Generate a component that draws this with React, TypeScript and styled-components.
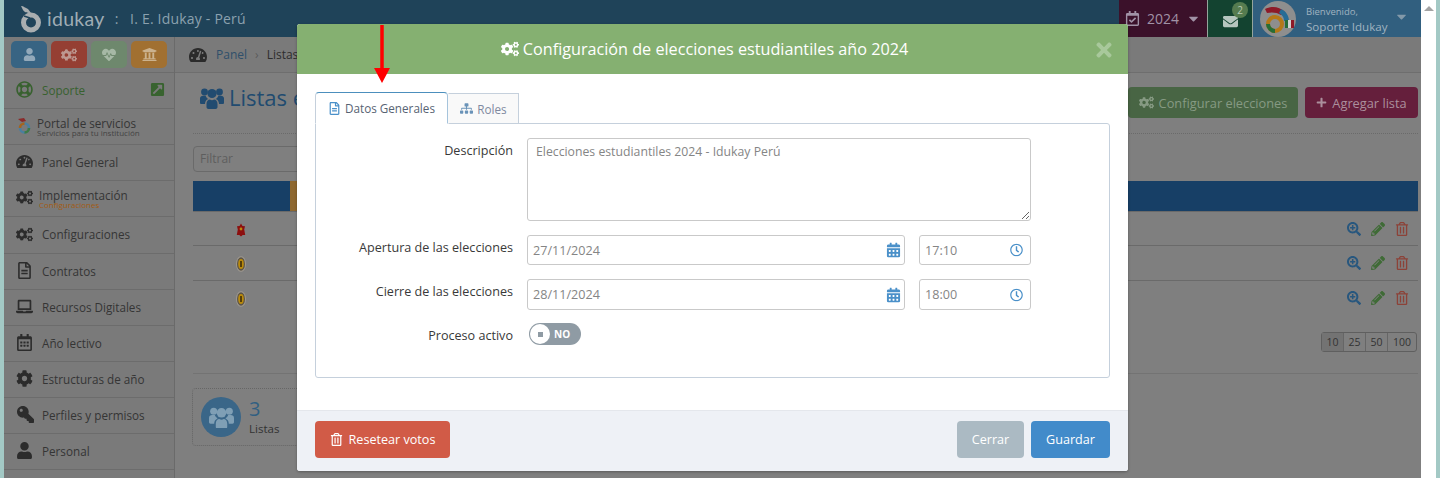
import styled, { createGlobalStyle } from "styled-components";
import {
  FaCalendarAlt,
  FaCaretDown,
  FaCog,
  FaCogs,
  FaEnvelope,
  FaExternalLinkSquareAlt,
  FaHeartbeat,
  FaKey,
  FaLaptop,
  FaPencilAlt,
  FaPlus,
  FaRegCalendarAlt,
  FaRegCalendarCheck,
  FaRegClock,
  FaRegFileAlt,
  FaRegLifeRing,
  FaRegTrashAlt,
  FaSearchPlus,
  FaSitemap,
  FaTachometerAlt,
  FaTimes,
  FaUniversity,
  FaUser,
} from "react-icons/fa";

const GlobalStyle = createGlobalStyle`
  html, body {
    margin: 0;
    padding: 0;
    background: #ffffff;
    font-family: "Open Sans", "Noto Sans", sans-serif;
  }
  * { box-sizing: border-box; }
`;

const Page = styled.div`
  position: relative;
  display: flex;
  width: 1440px;
  height: 478px;
  overflow: hidden;
`;

const EdgeStrip = styled.div<{ $width: number }>`
  flex: 0 0 ${({ $width }) => $width}px;
  background: #a3c9c5;
`;

const Shell = styled.div`
  flex: 0 0 1417px;
  display: flex;
  flex-direction: column;
  background: #7f7f7f;
`;

const ScrollTrack = styled.div`
  flex: 0 0 15px;
  background: #ffffff;
  display: flex;
  justify-content: center;
  padding-top: 6px;
`;

const ScrollArrow = styled.div`
  width: 0;
  height: 0;
  border-left: 5px solid transparent;
  border-right: 5px solid transparent;
  border-bottom: 5px solid #a3a3a3;
`;

const TopBar = styled.header`
  flex: 0 0 37px;
  display: flex;
  align-items: stretch;
  background: #1f4359;
`;

const Brand = styled.div`
  flex: 1;
  display: flex;
  align-items: center;
  padding-left: 15px;
  color: #a9b9c3;
`;

const BrandName = styled.span`
  font-family: "Lato", sans-serif;
  font-size: 19.5px;
  font-weight: 400;
  margin-left: 5px;
  letter-spacing: 0.3px;
  color: #9fadb5;
`;

const BrandSchool = styled.span`
  font-size: 14px;
  margin-left: 10px;
  letter-spacing: 0.2px;
  color: #8ba1af;
`;

const YearBlock = styled.div`
  flex: 0 0 89px;
  display: flex;
  align-items: center;
  gap: 7px;
  padding-left: 6px;
  background: #3b112a;
  color: #a192a6;
  font-size: 14px;
  border-right: 1px solid #95a59c;
`;

const MailBlock = styled.div`
  position: relative;
  flex: 0 0 45px;
  display: flex;
  align-items: center;
  justify-content: center;
  padding-top: 5px;
  background: #134330;
  color: #b6c6bf;
  font-size: 15px;
  border-right: 1px solid #95a59c;
`;

const MailBadge = styled.span`
  position: absolute;
  top: 2px;
  left: 24px;
  width: 16px;
  height: 16px;
  border-radius: 50%;
  background: #557b4f;
  color: #b8cbb5;
  font-size: 10px;
  line-height: 16px;
  text-align: center;
`;

const UserBlock = styled.div`
  flex: 0 0 168px;
  display: flex;
  align-items: center;
  padding-left: 7px;
  background: #315f7f;
  color: #a0b3c0;
`;

const Avatar = styled.svg`
  width: 36px;
  height: 36px;
  flex: none;
`;

const UserText = styled.div`
  display: flex;
  flex-direction: column;
  margin-left: 10px;
  line-height: 13px;
`;

const UserHello = styled.span`
  font-size: 9.5px;
`;

const UserName = styled.span`
  font-size: 11.6px;
  margin-top: 2px;
  white-space: nowrap;
`;

const UserCaret = styled.span`
  display: flex;
  margin-left: 6px;
  margin-top: -5px;
  font-size: 15px;
  color: #8399a9;
`;

const Body = styled.div`
  flex: 1;
  display: flex;
  min-height: 0;
`;

const Sidebar = styled.aside`
  flex: 0 0 171px;
  background: #7a7a7a;
  border-right: 1px solid #6a6a6a;
  overflow: hidden;
`;

const ShortcutRow = styled.div`
  height: 36px;
  display: flex;
  gap: 4px;
  padding: 4px 0 0 7px;
  border-bottom: 1px solid #6c6c6c;
`;

const Shortcut = styled.div<{ $bg: string; $fg: string; $size: number }>`
  flex: 0 0 36px;
  height: 27px;
  border-radius: 5px;
  display: flex;
  align-items: center;
  justify-content: center;
  background: ${({ $bg }) => $bg};
  color: ${({ $fg }) => $fg};
  font-size: ${({ $size }) => $size}px;
`;

const NavRow = styled.div<{ $green?: boolean; $tall?: boolean }>`
  position: relative;
  height: ${({ $tall }) => ($tall ? "37px" : "36px")};
  display: flex;
  align-items: center;
  padding: 0 0 2px 4px;
  border-bottom: 1px solid #6c6c6c;
  color: ${({ $green }) => ($green ? "#38612f" : "#353535")};
  font-size: 11.7px;
`;

const NavIcon = styled.span<{ $color?: string; $flip?: boolean }>`
  flex: 0 0 34px;
  display: flex;
  justify-content: center;
  padding-right: 2px;
  font-size: 17px;
  color: ${({ $color }) => $color ?? "#2c2c2c"};
  transform: ${({ $flip }) => ($flip ? "scaleX(-1)" : "none")};
`;

const NavStack = styled.div<{ $shift: number }>`
  display: flex;
  flex-direction: column;
  margin-left: ${({ $shift }) => $shift}px;
  line-height: 11px;
  padding-top: 3px;
`;

const NavSub = styled.span<{ $orange?: boolean }>`
  font-size: 8px;
  line-height: 7px;
  color: ${({ $orange }) => ($orange ? "#a35a14" : "#444444")};
`;

const NavJump = styled.span`
  position: absolute;
  top: 9px;
  right: 9px;
  font-size: 15px;
  line-height: 15px;
  color: #38632f;
`;

const Main = styled.main`
  flex: 1;
  min-width: 0;
  display: flex;
  flex-direction: column;
  padding: 0 3px 0 18px;
`;

const Breadcrumb = styled.nav`
  flex: 0 0 36px;
  margin: 0 -3px 0 -18px;
  padding-left: 14px;
  display: flex;
  align-items: center;
  border-bottom: 1px solid #6e6e6e;
  background: #7a7a7a;
  font-size: 12px;
  color: #2f4f6a;
`;

const CrumbIcon = styled.span`
  display: flex;
  margin-right: 9px;
  font-size: 18px;
  color: #2b2b2b;
`;

const CrumbSep = styled.span`
  margin: 0 8px;
  color: #5a5a5a;
`;

const CrumbCurrent = styled.span`
  color: #2d2d2d;
`;

const TitleRow = styled.div`
  flex: 0 0 61px;
  display: flex;
  align-items: flex-start;
  justify-content: space-between;
  border-bottom: 1px dotted #6a6a6a;
  padding-top: 9px;
`;

const Title = styled.h1`
  margin: 0;
  display: flex;
  align-items: center;
  gap: 5px;
  padding-left: 7px;
  font-size: 22px;
  font-weight: 400;
  line-height: 31px;
  color: #214b70;
`;

const GroupGlyph = styled.svg<{ $width: number }>`
  width: ${({ $width }) => $width}px;
  height: auto;
  fill: currentColor;
  flex: none;
`;

const Actions = styled.div`
  display: flex;
  gap: 7px;
  margin-top: 5px;
`;

const ActionButton = styled.div<{ $bg: string; $fg: string; $width: number }>`
  width: ${({ $width }) => $width}px;
  height: 31px;
  border-radius: 4px;
  display: flex;
  align-items: center;
  justify-content: center;
  gap: 5px;
  background: ${({ $bg }) => $bg};
  color: ${({ $fg }) => $fg};
  font-size: 12.8px;
`;

const ActionIcon = styled.span<{ $size: number }>`
  display: flex;
  font-size: ${({ $size }) => $size}px;
`;

const FilterBox = styled.div`
  margin-top: 12px;
  height: 26px;
  width: 400px;
  border: 1px solid #6a6a6a;
  border-radius: 4px;
  padding-left: 6px;
  font-size: 12px;
  line-height: 24px;
  color: #5e5e5e;
`;

const TableHead = styled.div`
  margin-top: 9px;
  flex: 0 0 31px;
  display: flex;
  background: #173f66;
  border-bottom: 1px solid #6a6a6a;
`;

const HeadCell = styled.div<{ $orange?: boolean; $width: string }>`
  flex: ${({ $width }) => $width};
  background: ${({ $orange }) => ($orange ? "#8e6830" : "transparent")};
`;

const Row = styled.div<{ $height: number; $last?: boolean }>`
  flex: 0 0 ${({ $height }) => $height}px;
  display: flex;
  align-items: flex-start;
  justify-content: space-between;
  padding-top: 10px;
  border-bottom: 1px solid ${({ $last }) => ($last ? "transparent" : "#6a6a6a")};
`;

const MedalCell = styled.div`
  flex: 0 0 95px;
  display: flex;
  justify-content: center;
`;

const RowTools = styled.div`
  display: flex;
  gap: 10px;
  padding-right: 9px;
  font-size: 14px;
`;

const RowTool = styled.span<{ $color: string }>`
  display: flex;
  color: ${({ $color }) => $color};
`;

const PageSizes = styled.div`
  align-self: flex-end;
  margin: 16px 1px 0 0;
  height: 20px;
  display: flex;
  border: 1px solid #5f5f5f;
  border-radius: 3px;
  font-size: 10.5px;
  line-height: 18px;
  color: #333333;
`;

const PageSize = styled.span<{ $active?: boolean; $width: number }>`
  width: ${({ $width }) => $width}px;
  text-align: center;
  background: ${({ $active }) => ($active ? "#737373" : "transparent")};
  border-left: 1px solid #666666;
  &:first-child {
    border-left: 0;
  }
`;

const Divider = styled.div`
  margin-top: 21px;
  border-top: 1px solid #737373;
`;

const StatCard = styled.div`
  margin: 14px 0 0 -1px;
  width: 400px;
  height: 58px;
  display: flex;
  align-items: center;
  gap: 8px;
  padding-left: 8px;
  border: 1px dotted #666666;
  border-radius: 4px;
`;

const StatCircle = styled.div`
  flex: 0 0 40px;
  height: 40px;
  border-radius: 50%;
  display: flex;
  align-items: center;
  justify-content: center;
  background: #3a6688;
  color: #7f9fb5;
`;

const StatText = styled.div`
  display: flex;
  flex-direction: column;
`;

const StatValue = styled.span`
  font-size: 20px;
  line-height: 24px;
  color: #315f82;
`;

const StatLabel = styled.span`
  font-size: 11.5px;
  line-height: 16px;
  color: #333333;
`;

const Modal = styled.section`
  position: absolute;
  top: 24px;
  left: 297px;
  width: 831px;
  height: 447px;
  display: flex;
  flex-direction: column;
  background: #ffffff;
  border-radius: 3px;
  overflow: hidden;
  box-shadow: 0 1px 3px rgba(0, 0, 0, 0.3);
`;

const ModalHeader = styled.header`
  position: relative;
  flex: 0 0 50px;
  display: flex;
  align-items: center;
  justify-content: center;
  gap: 4px;
  padding-right: 16px;
  background: #85b071;
  color: #ffffff;
  font-size: 16.2px;
  font-weight: 500;
`;

const HeaderIcon = styled.span`
  display: flex;
  font-size: 18px;
`;

const CloseIcon = styled.span`
  position: absolute;
  top: 15px;
  right: 13px;
  display: flex;
  font-size: 22px;
  color: #a8c89b;
`;

const ModalBody = styled.div`
  flex: 1;
  padding: 18px 18px 32px;
`;

const Tabs = styled.div`
  display: flex;
  align-items: flex-end;
  height: 32px;
  margin-bottom: -1px;
  position: relative;
  z-index: 1;
`;

const Tab = styled.div<{ $active?: boolean; $width: number }>`
  width: ${({ $width }) => $width}px;
  height: ${({ $active }) => ($active ? "32px" : "31px")};
  display: flex;
  align-items: center;
  justify-content: center;
  gap: 4px;
  font-size: 11.7px;
  background: ${({ $active }) => ($active ? "#ffffff" : "#f9f9f9")};
  color: ${({ $active }) => ($active ? "#576373" : "#8089a0")};
  border: 1px solid #c5d0dc;
  border-top-color: ${({ $active }) => ($active ? "#4c8fbd" : "#c5d0dc")};
  border-left-color: ${({ $active }) => ($active ? "#c5d0dc" : "transparent")};
  border-right-color: ${({ $active }) => ($active ? "#a6c4dc" : "#c5d0dc")};
  border-bottom-color: ${({ $active }) => ($active ? "#ffffff" : "#c5d0dc")};
  border-radius: ${({ $active }) => ($active ? "4px 4px 0 0" : "0")};
`;

const TabIcon = styled.span<{ $color: string }>`
  display: flex;
  font-size: 13px;
  color: ${({ $color }) => $color};
`;

const TabPanel = styled.div`
  height: 255px;
  border: 1px solid #c5d0dc;
  border-radius: 0 3px 3px 3px;
  padding: 14px 0 0;
  display: grid;
  grid-template-columns: 197px 504px;
  column-gap: 14px;
  grid-auto-rows: min-content;
`;

const FieldLabel = styled.label<{ $rowHeight: number; $gap: number }>`
  min-height: ${({ $rowHeight }) => $rowHeight}px;
  margin-bottom: ${({ $gap }) => $gap}px;
  padding-top: 4px;
  text-align: right;
  font-size: 12.6px;
  line-height: 18px;
  color: #393939;
`;

const Notes = styled.textarea`
  display: block;
  width: 504px;
  height: 83px;
  margin: 0 0 14px;
  padding: 4px 8px;
  border: 1px solid #c9c9c9;
  border-radius: 3px;
  font: 12.25px/18px "Open Sans", sans-serif;
  color: #858585;
  outline: none;
`;

const DateRow = styled.div<{ $height: number; $gap: number }>`
  display: flex;
  gap: 14px;
  height: ${({ $height }) => $height}px;
  margin-bottom: ${({ $gap }) => $gap}px;
`;

const DateField = styled.div<{ $width: number }>`
  position: relative;
  flex: 0 0 ${({ $width }) => $width}px;
`;

const DateInput = styled.input`
  display: block;
  width: 100%;
  height: 100%;
  padding: 0 5px;
  border: 1px solid #c9c9c9;
  border-radius: 3px;
  font: 12.6px "Open Sans", sans-serif;
  color: #858585;
  outline: none;
`;

const FieldIcon = styled.span<{ $right: number; $size: number }>`
  position: absolute;
  top: 50%;
  right: ${({ $right }) => $right}px;
  transform: translateY(-50%);
  display: flex;
  font-size: ${({ $size }) => $size}px;
  color: #4a90c9;
`;

const SwitchCell = styled.div`
  padding-left: 2px;
`;

const Switch = styled.div`
  width: 52px;
  height: 22px;
  display: flex;
  align-items: center;
  padding-left: 1px;
  border-radius: 11px;
  background: #8f9ba4;
`;

const SwitchKnob = styled.span`
  flex: 0 0 20px;
  height: 20px;
  border-radius: 50%;
  background: #ffffff;
  display: flex;
  align-items: center;
  justify-content: center;
  &::before {
    content: "";
    width: 5px;
    height: 5px;
    background: #8f9ba4;
  }
`;

const SwitchText = styled.span`
  margin-left: 4px;
  font-size: 10px;
  font-weight: 700;
  color: #ffffff;
`;

const ModalFooter = styled.footer`
  flex: 0 0 61px;
  display: flex;
  align-items: flex-start;
  justify-content: space-between;
  padding: 10px 18px 0;
  background: #eef1f6;
  border-top: 1px solid #e4e7ec;
`;

const FooterGroup = styled.div`
  display: flex;
  gap: 7px;
`;

const FooterButton = styled.div<{ $bg: string; $width: number }>`
  width: ${({ $width }) => $width}px;
  height: 37px;
  border-radius: 4px;
  display: flex;
  align-items: center;
  justify-content: center;
  gap: 6px;
  background: ${({ $bg }) => $bg};
  color: #ffffff;
  font-size: 12.6px;
`;

const PointerArrow = styled.svg`
  position: absolute;
  top: 25px;
  left: 372px;
  width: 20px;
  height: 60px;
`;

const LogoMark = () => (
  <svg width="23" height="28" viewBox="0 0 23 28" fill="none">
    <path d="M2 1c3 0 4 2 7 3l3 4c-3 0-6 0-8-3z" fill="#a9aeb0" />
    <circle cx="12" cy="17.5" r="7.5" stroke="#a9aeb0" strokeWidth="5" />
    <path d="M5 11l6 2" stroke="#1f4359" strokeWidth="1.5" />
  </svg>
);

const AvatarMark = () => (
  <Avatar viewBox="0 0 36 36">
    <circle cx="18" cy="18" r="18" fill="#8e8e8e" />
    <path d="M5 8c6-3 14-3 20 3l-4 3c-4-3-10-3-14-2z" fill="#8e1a28" />
    <path d="M21 8c5 2 8 7 8 12h-5c0-4-2-6-5-8z" fill="#266c96" />
    <circle cx="15" cy="23" r="7" fill="none" stroke="#b47818" strokeWidth="4" />
    <path d="M8 23a7 7 0 0 0 7 7" stroke="#276d36" strokeWidth="4" fill="none" />
    <rect x="25" y="19" width="3" height="8" fill="#276d36" />
    <rect x="28" y="19" width="3" height="8" fill="#d0d0d0" />
    <rect x="31" y="19" width="3" height="8" fill="#8e1a28" />
  </Avatar>
);

const PortalMark = () => (
  <svg width="15" height="18" viewBox="0 0 15 18" fill="none">
    <path d="M1 2l6-1 2 3 -4 1z" fill="#8a2a2a" />
    <circle cx="7.5" cy="11" r="4.5" stroke="#4a7fa0" strokeWidth="2.6" />
    <path d="M3 11a4.5 4.5 0 0 1 4.5-4.5" stroke="#a8641c" strokeWidth="2.6" />
    <path d="M7.5 15.5a4.5 4.5 0 0 0 4.5-4.5" stroke="#3f7a45" strokeWidth="2.6" />
  </svg>
);

// Three-person group, closer to the taller glyph in the picture than the package one
const GroupIcon = ({ width }: { width: number }) => (
  <GroupGlyph $width={width} viewBox="0 0 24 22">
    <circle cx="4.5" cy="5" r="3.4" />
    <circle cx="19.5" cy="5" r="3.4" />
    <circle cx="12" cy="6.5" r="4.6" />
    <path d="M0 11.5c0-2 1.5-2.8 3-2.8h2.6c.6 1.6 1.6 2.6 2.6 3.4C6 13 5 15 5 17H1.5C.5 17 0 16.3 0 15.4z" />
    <path d="M24 11.5c0-2-1.5-2.8-3-2.8h-2.6c-.6 1.6-1.6 2.6-2.6 3.4 2.2.9 3.2 2.9 3.2 4.9h3.5c1 0 1.5-.7 1.5-1.6z" />
    <path d="M6.5 17c0-2.8 1.6-4.4 3.4-4.4.7.4 1.3.6 2.1.6s1.4-.2 2.1-.6c1.8 0 3.4 1.6 3.4 4.4v3c0 1.2-.8 2-2 2h-7c-1.2 0-2-.8-2-2z" />
  </GroupGlyph>
);

const Medal = ({ gold }: { gold?: boolean }) => (
  <svg width="10" height="16" viewBox="0 0 10 16">
    {gold ? (
      <>
        <ellipse cx="5" cy="8" rx="5" ry="7.8" fill="#a09a90" />
        <ellipse cx="5" cy="8" rx="4" ry="6.8" fill="#5c5448" />
        <ellipse cx="5" cy="8" rx="2.8" ry="5" fill="#b98a0c" />
        <rect x="4.2" y="5" width="1.6" height="6" fill="#3d2c08" />
      </>
    ) : (
      <>
        <path d="M5 1.5l1.5 2.5 2.5.3 -.8 3.2 1 5.5 -2.5 0 -1.7 1.5 -1.7-1.5 -2.5 0 1-5.5 -.8-3.2 2.5-.3z" fill="#8c0f0f" />
        <circle cx="5" cy="7" r="1.4" fill="#b98a0c" />
      </>
    )}
  </svg>
);

const navItems = [
  { label: "Panel General", icon: <FaTachometerAlt /> },
  { label: "Implementación", sub: "Configuraciones", icon: <FaCogs /> },
  { label: "Configuraciones", icon: <FaCogs />, tall: true },
  { label: "Contratos", icon: <FaRegFileAlt /> },
  { label: "Recursos Digitales", icon: <FaLaptop /> },
  { label: "Año lectivo", icon: <FaRegCalendarAlt /> },
  { label: "Estructuras de año", icon: <FaCog /> },
  { label: "Perfiles y permisos", icon: <FaKey />, flip: true },
  { label: "Personal", icon: <FaUser /> },
];

const listRows = [
  { height: 34, gold: false },
  { height: 35, gold: true },
  { height: 35, gold: true, last: true },
];

const App = () => {
  return (
    <Page>
      <GlobalStyle />
      <EdgeStrip $width={4} />
      <Shell>
        <TopBar>
          <Brand>
            <LogoMark />
            <BrandName>idukay</BrandName>
            <BrandSchool>:&nbsp;&nbsp;&nbsp;I. E. Idukay - Perú</BrandSchool>
          </Brand>
          <YearBlock>
            <FaRegCalendarCheck size={15} />
            <span>2024</span>
            <FaCaretDown size={15} />
          </YearBlock>
          <MailBlock>
            <FaEnvelope />
            <MailBadge>2</MailBadge>
          </MailBlock>
          <UserBlock>
            <AvatarMark />
            <UserText>
              <UserHello>Bienvenido,</UserHello>
              <UserName>Soporte Idukay</UserName>
            </UserText>
            <UserCaret>
              <FaCaretDown />
            </UserCaret>
          </UserBlock>
        </TopBar>
        <Body>
          <Sidebar>
            <ShortcutRow>
              <Shortcut $bg="#386483" $fg="#93a9ba" $size={13}>
                <FaUser />
              </Shortcut>
              <Shortcut $bg="#953f33" $fg="#bd9890" $size={16}>
                <FaCogs />
              </Shortcut>
              <Shortcut $bg="#6e886d" $fg="#a6b8a5" $size={14}>
                <FaHeartbeat />
              </Shortcut>
              <Shortcut $bg="#a17031" $fg="#cbb28e" $size={15}>
                <FaUniversity />
              </Shortcut>
            </ShortcutRow>
            <NavRow $green>
              <NavIcon $color="#38612f">
                <FaRegLifeRing />
              </NavIcon>
              Soporte
              <NavJump>
                <FaExternalLinkSquareAlt />
              </NavJump>
            </NavRow>
            <NavRow>
              <NavIcon>
                <PortalMark />
              </NavIcon>
              <NavStack $shift={-5}>
                Portal de servicios
                <NavSub>Servicios para tu institución</NavSub>
              </NavStack>
            </NavRow>
            {navItems.map((item) => (
              <NavRow key={item.label} $tall={item.tall}>
                <NavIcon $flip={item.flip}>{item.icon}</NavIcon>
                {item.sub ? (
                  <NavStack $shift={-3}>
                    {item.label}
                    <NavSub $orange>{item.sub}</NavSub>
                  </NavStack>
                ) : (
                  item.label
                )}
              </NavRow>
            ))}
          </Sidebar>
          <Main>
            <Breadcrumb>
              <CrumbIcon>
                <FaTachometerAlt />
              </CrumbIcon>
              Panel
              <CrumbSep>›</CrumbSep>
              <CrumbCurrent>Listas</CrumbCurrent>
            </Breadcrumb>
            <TitleRow>
              <Title>
                <GroupIcon width={24} />
                Listas electorales
              </Title>
              <Actions>
                <ActionButton $bg="#486544" $fg="#869a83" $width={170}>
                  <ActionIcon $size={15}>
                    <FaCogs />
                  </ActionIcon>
                  Configurar elecciones
                </ActionButton>
                <ActionButton $bg="#651f3c" $fg="#ab8f9c" $width={113}>
                  <ActionIcon $size={11}>
                    <FaPlus />
                  </ActionIcon>
                  Agregar lista
                </ActionButton>
              </Actions>
            </TitleRow>
            <FilterBox>Filtrar</FilterBox>
            <TableHead>
              <HeadCell $width="0 0 97px" />
              <HeadCell $width="0 0 400px" $orange />
            </TableHead>
            {listRows.map((row, index) => (
              <Row key={index} $height={row.height} $last={row.last}>
                <MedalCell>
                  <Medal gold={row.gold} />
                </MedalCell>
                <RowTools>
                  <RowTool $color="#28577e">
                    <FaSearchPlus />
                  </RowTool>
                  <RowTool $color="#3f6b36">
                    <FaPencilAlt />
                  </RowTool>
                  <RowTool $color="#8c4238">
                    <FaRegTrashAlt />
                  </RowTool>
                </RowTools>
              </Row>
            ))}
            <PageSizes>
              <PageSize $active $width={21}>10</PageSize>
              <PageSize $width={22}>25</PageSize>
              <PageSize $width={22}>50</PageSize>
              <PageSize $width={29}>100</PageSize>
            </PageSizes>
            <Divider />
            <StatCard>
              <StatCircle>
                <GroupIcon width={25} />
              </StatCircle>
              <StatText>
                <StatValue>3</StatValue>
                <StatLabel>Listas</StatLabel>
              </StatText>
            </StatCard>
          </Main>
        </Body>
      </Shell>
      <ScrollTrack>
        <ScrollArrow />
      </ScrollTrack>
      <EdgeStrip $width={4} />

      <Modal>
        <ModalHeader>
          <HeaderIcon>
            <FaCogs />
          </HeaderIcon>
          Configuración de elecciones estudiantiles año 2024
          <CloseIcon>
            <FaTimes />
          </CloseIcon>
        </ModalHeader>
        <ModalBody>
          <Tabs>
            <Tab $active $width={133}>
              <TabIcon $color="#4a90c9">
                <FaRegFileAlt />
              </TabIcon>
              Datos Generales
            </Tab>
            <Tab $width={71}>
              <TabIcon $color="#6a93b8">
                <FaSitemap />
              </TabIcon>
              Roles
            </Tab>
          </Tabs>
          <TabPanel>
            <FieldLabel $rowHeight={83} $gap={14}>Descripción</FieldLabel>
            <Notes readOnly value="Elecciones estudiantiles 2024 - Idukay Perú" />
            <FieldLabel $rowHeight={30} $gap={14}>Apertura de las elecciones</FieldLabel>
            <DateRow $height={30} $gap={14}>
              <DateField $width={378}>
                <DateInput readOnly value="27/11/2024" />
                <FieldIcon $right={4} $size={15}>
                  <FaCalendarAlt />
                </FieldIcon>
              </DateField>
              <DateField $width={112}>
                <DateInput readOnly value="17:10" />
                <FieldIcon $right={8} $size={13}>
                  <FaRegClock />
                </FieldIcon>
              </DateField>
            </DateRow>
            <FieldLabel $rowHeight={31} $gap={13}>Cierre de las elecciones</FieldLabel>
            <DateRow $height={31} $gap={13}>
              <DateField $width={378}>
                <DateInput readOnly value="28/11/2024" />
                <FieldIcon $right={4} $size={15}>
                  <FaCalendarAlt />
                </FieldIcon>
              </DateField>
              <DateField $width={112}>
                <DateInput readOnly value="18:00" />
                <FieldIcon $right={8} $size={13}>
                  <FaRegClock />
                </FieldIcon>
              </DateField>
            </DateRow>
            <FieldLabel $rowHeight={22} $gap={0}>Proceso activo</FieldLabel>
            <SwitchCell>
              <Switch>
                <SwitchKnob />
                <SwitchText>NO</SwitchText>
              </Switch>
            </SwitchCell>
          </TabPanel>
        </ModalBody>
        <ModalFooter>
          <FooterButton $bg="#d15b47" $width={135}>
            <FaRegTrashAlt size={13} />
            Resetear votos
          </FooterButton>
          <FooterGroup>
            <FooterButton $bg="#abbac3" $width={67}>Cerrar</FooterButton>
            <FooterButton $bg="#428bca" $width={79}>Guardar</FooterButton>
          </FooterGroup>
        </ModalFooter>
      </Modal>

      <PointerArrow viewBox="0 0 20 60">
        <path d="M10 0v46" stroke="#ff0000" strokeWidth="3.5" />
        <path d="M2 43h16l-8 15z" fill="#ff0000" />
      </PointerArrow>
    </Page>
  );
};

export default App;
